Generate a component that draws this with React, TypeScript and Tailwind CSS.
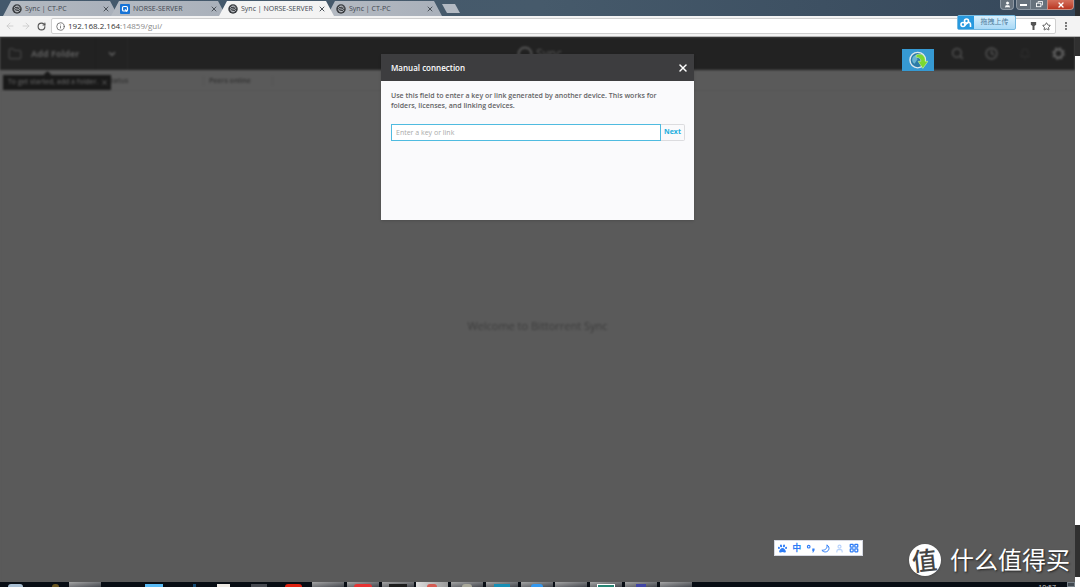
import type { ReactNode } from 'react'
import { ArrowLeft, ArrowRight, Bell, ChevronDown, Clock, Folder, Info, LayoutGrid, MoreVertical, RotateCw, Search, Star, User, X } from 'lucide-react'
import { FaPaw } from 'react-icons/fa'

function SyncIcon() {
  return (
    <svg viewBox="0 0 20 20" className="size-[10px] shrink-0">
      <circle cx="10" cy="10" r="9.500" fill="#3a3d41" />
      <path d="M15.500 7A6 6 0 0 0 5 7c-1 4 10 2 10 6a6 6 0 0 1-10 0" fill="none" stroke="#c5c9cf" strokeWidth="1.800" />
      <path d="M8 5c4 0 7 2 8 5M4 10c2 3 5 5 8 5" fill="none" stroke="#c5c9cf" strokeWidth="1.400" />
    </svg>
  )
}

function ServerIcon() {
  return (
    <svg viewBox="0 0 20 20" className="size-[10px] shrink-0">
      <rect width="20" height="20" rx="2" fill="#1673d6" />
      <rect x="5" y="5" width="10" height="9" rx="2.500" fill="none" stroke="#fff" strokeWidth="2.400" />
      <path d="M10 11l4 4" stroke="#fff" strokeWidth="2.400" />
    </svg>
  )
}

function GearIcon() {
  return (
    <svg viewBox="0 0 24 24" className="size-[13px]" fill="none" stroke="currentColor">
      <circle cx="12" cy="12" r="7.500" strokeWidth="4" />
      <circle cx="12" cy="12" r="10.500" strokeWidth="2.500" strokeDasharray="4.120 4.120" />
    </svg>
  )
}

const tabs = [
  { title: 'Sync | CT-PC', icon: <SyncIcon /> },
  { title: 'NORSE-SERVER', icon: <ServerIcon /> },
  { title: 'Sync | NORSE-SERVER', icon: <SyncIcon />, active: true },
  { title: 'Sync | CT-PC', icon: <SyncIcon /> },
]

function Tab({ title, icon, active }: { title: string; icon: ReactNode; active?: boolean }) {
  return (
    <div
      className={`-mr-[7px] flex w-[115px] items-center pr-[8px] pl-[9px] [clip-path:polygon(8px_0,107px_0,100%_100%,0_100%)] ${
        active ? 'z-10 bg-[#f3f3f3]' : 'bg-linear-to-r from-[#b4bac2] to-[#a9b0ba]'
      }`}
    >
      {icon}
      <span className="ml-[3px] flex-1 text-[7px] leading-[10px] whitespace-nowrap text-[#3f4650]">{title}</span>
      <button type="button" aria-label="Close tab" className="text-[#4b525a]">
        <X size={8} strokeWidth={3} />
      </button>
    </div>
  )
}

function TitleBar() {
  return (
    <div className="flex h-[16px] bg-linear-to-r from-[#43586c] via-[#465a6b] to-[#35475a]">
      <div className="flex flex-1 pt-px pl-[3px]">
        {tabs.map((tab, i) => (
          <Tab key={i} {...tab} />
        ))}
        <button type="button" aria-label="New tab" className="mt-[3px] ml-[7px] h-[9px] w-[18px] bg-[#b3bac3] [clip-path:polygon(0_0,13px_0,100%_100%,5px_100%)]" />
      </div>
      <div className="flex h-[10px] text-white">
        <button type="button" aria-label="Profile" className="mr-[2px] flex w-[14px] items-center justify-center rounded-b-sm border border-t-0 border-[#8e98a3] bg-[#66717c]">
          <User size={7} fill="currentColor" />
        </button>
        <button type="button" aria-label="Minimize" className="flex w-[15px] items-center justify-center rounded-bl-sm border border-t-0 border-[#8e98a3] bg-[#66717c]">
          <span className="h-[2px] w-[7px] bg-white" />
        </button>
        <button type="button" aria-label="Restore" className="flex w-[16px] items-center justify-center border-b border-[#8e98a3] bg-[#66717c]">
          <svg viewBox="0 0 8 8" className="size-[7px]" fill="none" stroke="#fff">
            <path d="M2.500 2V.5h5v4H6" />
            <rect x=".5" y="2.500" width="5" height="4" />
          </svg>
        </button>
        <button type="button" aria-label="Close" className="mr-px flex w-[27px] items-center justify-center rounded-br-sm border border-t-0 border-[#c98f82] bg-linear-to-b from-[#d4705c] to-[#b93621]">
          <X size={8} strokeWidth={4} />
        </button>
      </div>
      <div className="h-[16px] w-[5px] bg-[#2b2d30]" />
    </div>
  )
}

function Toolbar() {
  return (
    <div className="flex h-[21px] items-center border-b border-[#b5b5b5] bg-[#f3f3f3] pl-[5px] text-[#555]">
      <button type="button" aria-label="Back" className="mr-[6px] text-[#cacaca]"><ArrowLeft size={10} /></button>
      <button type="button" aria-label="Forward" className="mr-[6px] text-[#cacaca]"><ArrowRight size={10} /></button>
      <button type="button" aria-label="Reload" className="mr-[5px]"><RotateCw size={9} strokeWidth={3} /></button>
      <div className="flex h-[16px] flex-1 items-center rounded-xs border border-[#cfcfcf] bg-white px-[4px]">
        <Info size={9} />
        <label className="relative ml-[3px] flex-1 text-[8px] leading-[12px]">
          <span className="pointer-events-none absolute inset-0 text-[#8a8a8a]"><span className="text-[#333]">192.168.2.164</span>:14859/gui/</span>
          <input aria-label="Address" defaultValue="192.168.2.164:14859/gui/" className="block w-full text-transparent outline-none" />
        </label>
        <svg viewBox="0 0 10 12" className="mr-[5px] h-[8px] w-[7px]" fill="#555">
          <path d="M1 0h8v4L6.500 6v6h-3V6L1 4z" />
        </svg>
        <Star size={9} strokeWidth={2.500} />
      </div>
      <button type="button" aria-label="Menu" className="mr-[9px] ml-[5px]"><MoreVertical size={10} strokeWidth={3} /></button>
    </div>
  )
}

function SyncApp() {
  return (
    <div className="flex flex-1 flex-col bg-[#5a5a5a] blur-[1px]">
      <header className="flex h-[33px] items-center bg-[#222]">
        <button type="button" className="flex h-full w-[96px] items-center border-r border-[#1e1e1e] pl-[8px] text-[9px] font-bold text-[#5c5c5c]">
          <Folder size={14} className="mr-[9px] text-[#484848]" />
          Add Folder
        </button>
        <button type="button" aria-label="More options" className="flex h-full w-[32px] items-center justify-center border-r border-[#272727] text-[#606060]">
          <ChevronDown size={10} strokeWidth={4} />
        </button>
        <div className="flex flex-1 items-center justify-center text-[12px] text-[#555]">
          <svg viewBox="0 0 16 16" className="mr-[3px] size-[16px]" fill="none" stroke="currentColor" strokeWidth="2">
            <circle cx="8" cy="8" r="6.500" />
          </svg>
          Sync
        </div>
        <div className="flex w-[124px] items-center justify-between pr-[10px] text-[#4c4c4c]">
          <Search size={13} strokeWidth={3} />
          <Clock size={13} strokeWidth={3} />
          <Bell size={12} className="text-[#303030]" />
          <span className="text-[#606060]"><GearIcon /></span>
        </div>
      </header>
      <div className="flex h-[21px] items-center border-b border-[#555] pt-px text-[7px] leading-[10px] font-semibold text-[#303030]">
        <span className="w-[203px] pl-[107px]">Status</span>
        <span className="w-[70px] border-x border-[#545454] pl-[5px]">Peers online</span>
      </div>
      <div className="flex flex-1 items-center justify-center pb-[20px] text-[11px] text-[#3c3c3c]">Welcome to Bittorrent Sync</div>
    </div>
  )
}

function AddFolderHint() {
  return (
    <div className="absolute top-[38px] left-[3px] flex h-[15px] w-[108px] items-center justify-between bg-[#191919] pr-[3px] pl-[5px] text-[7px] text-[#6c6c6c] blur-[1px]">
      <span className="absolute -top-[3px] left-[42px] size-[5px] rotate-45 bg-[#191919]" />
      <span className="whitespace-nowrap">To get started, add a folder.</span>
      <X size={7} strokeWidth={3} />
    </div>
  )
}

function ManualConnection() {
  return (
    <div role="dialog" aria-labelledby="dialog-title" className="flex h-[166px] w-[313px] flex-col bg-[#fafafc] shadow-sm">
      <div className="flex h-[27px] items-center justify-between bg-[#3d3d3f] pr-[5px] pl-[10px] text-white">
        <h2 id="dialog-title" className="text-[8px] font-semibold">Manual connection</h2>
        <button type="button" aria-label="Close"><X size={12} strokeWidth={3} /></button>
      </div>
      <div className="pt-[10px] pr-[9px] pl-[10px]">
        <p className="pr-[16px] text-[7px] leading-[10px] font-semibold text-[#626264]">
          Use this field to enter a key or link generated by another device. This works for folders, licenses, and linking devices.
        </p>
        <div className="mt-[13px] flex h-[17px] text-[7px]">
          <input aria-label="Key or link" placeholder="Enter a key or link" className="min-w-0 flex-1 border border-[#4fbbe0] bg-white px-[4px] pt-px outline-none placeholder:text-[#aaa]" />
          <button type="button" className="w-[24px] rounded-r-xs border border-l-0 border-[#dcdcdf] font-bold text-[#22aede]">Next</button>
        </div>
      </div>
    </div>
  )
}

function DownloadBadge() {
  return (
    <button type="button" aria-label="Download" className="absolute top-[49px] left-[902px] flex h-[22px] w-[32px] items-center justify-center bg-[#3699d2]">
      <svg viewBox="0 0 24 24" className="size-[19px]">
        <circle cx="11" cy="11.500" r="9.800" fill="#2c7ba8" stroke="#dfe8ed" strokeWidth="1.800" />
        <path d="M4 11c0-4 3-6 6-6l-1 3 2 2-4 6c-2-1-3-3-3-5z" fill="#69b4d3" />
        <path d="M9 5c7-3 12 1 11.500 8H24l-6.500 9-6-9H15c0-3-2-5-6-5z" fill="#7bd831" stroke="#d9f5b8" strokeWidth=".7" />
      </svg>
    </button>
  )
}

function UploadWidget() {
  return (
    <button type="button" className="absolute top-[15px] left-[957px] flex h-[15px] w-[59px] items-center rounded-xs border border-[#75b8df] bg-linear-to-b from-[#d9f0fd] to-[#a9d9f6] text-[7px] text-[#4f7b9c]">
      <span className="flex h-full w-[16px] items-center justify-center bg-[#2799df]">
        <svg viewBox="0 0 24 20" className="h-[10px] w-[12px]" fill="none" stroke="#fff" strokeWidth="3.200">
          <circle cx="6" cy="13" r="4" />
          <circle cx="13" cy="6" r="4" />
          <path d="M9 15l7-6c3-1 5 1 5 4v5" />
        </svg>
      </span>
      <span className="flex-1 text-center whitespace-nowrap">拖拽上传</span>
    </button>
  )
}

function ImeBar() {
  return (
    <div className="absolute top-[540px] left-[774px] flex h-[16px] w-[89px] items-center justify-between border border-[#d5d8e2] bg-white px-[3px] text-[9px] font-bold text-[#2d7cf6]">
      <FaPaw size={9} />
      <span>中</span>
      <svg viewBox="0 0 10 10" className="size-[9px]">
        <circle cx="3" cy="3" r="1.500" fill="none" stroke="currentColor" strokeWidth="1.200" />
        <path d="M7 5h2.500v2L8 9.500H7L7.800 8H7z" fill="currentColor" />
      </svg>
      <svg viewBox="0 0 20 20" className="size-[9px]" fill="none" stroke="currentColor" strokeWidth="2.200">
        <path d="M13 2c2 6-2 12-11 12 4 5 12 5 15-1 2-4 0-9-4-11z" />
      </svg>
      <User size={9} strokeWidth={3} className="text-[#b5d1fc]" />
      <LayoutGrid size={10} strokeWidth={3} />
    </div>
  )
}

function Watermark() {
  return (
    <div className="absolute right-[10px] bottom-[11px] flex items-center text-white">
      <span className="mr-[9px] flex size-[32px] items-center justify-center rounded-full bg-white text-[25px] leading-none font-medium text-[#444] shadow-sm">
        <span className="-rotate-6">值</span>
      </span>
      <span className="text-[24px] leading-[32px] whitespace-nowrap text-shadow-[1px_1px_2px_#222]">什么值得买</span>
    </div>
  )
}

const windowStyle = 'w-[32px] bg-linear-to-br from-[#a5a5a5] to-[#474a50]'

const taskbar = [
  { box: '', mark: 'w-[15px] rounded-t-full bg-[#a9bfd3]' },
  { box: '', mark: 'ml-[10px] w-[7px] rounded-t-full bg-[#6b5620]' },
  { box: windowStyle, mark: '' },
  { box: '', mark: '' },
  { box: '', mark: 'w-[18px] bg-[#58baf5]' },
  { box: '', mark: 'ml-[10px] w-[3px] bg-[#164c75]' },
  { box: '', mark: 'w-[13px] bg-[#eeeae4]' },
  { box: '', mark: 'w-[16px] bg-[#45484f]' },
  { box: '', mark: 'w-[17px] rounded-t-sm bg-[#df2110]' },
  { box: windowStyle, mark: '' },
  { box: windowStyle, mark: 'w-[18px] rounded-t-full bg-[#e63232]' },
  { box: windowStyle, mark: 'w-[18px] bg-[#1c1c1c]' },
  { box: 'w-[32px] bg-linear-to-r from-[#ddd] to-[#999]', mark: 'w-[10px] rounded-t-full bg-[#d55b52]' },
  { box: windowStyle, mark: 'w-[10px] rounded-t-full bg-[#aaa99a]' },
  { box: windowStyle, mark: 'w-[16px] bg-[#168fb5]' },
  { box: windowStyle, mark: 'w-[12px] rounded-t-full bg-[#3398ef]' },
  { box: windowStyle, mark: '' },
  { box: windowStyle, mark: 'w-[18px] border border-b-0 border-white bg-[#278473]' },
  { box: windowStyle, mark: 'w-[10px] bg-[#4145a5]' },
  { box: windowStyle, mark: '' },
]

function Taskbar() {
  return (
    <div className="flex h-[5px] shrink-0 justify-between overflow-hidden bg-[#080d14]">
      <div className="-ml-[2px] flex w-[695px]">
        {taskbar.map(({ box, mark }, i) => (
          <div key={i} className="flex flex-1 justify-center">
            <div className={`flex h-[5px] justify-center pt-[2px] ${box}`}>
              <div className={`h-[3px] ${mark}`} />
            </div>
          </div>
        ))}
      </div>
      <div className="flex">
        <span className="mr-[11px] text-[7px] leading-[12px] text-[#ccc]">10:57</span>
        <button type="button" aria-label="Show desktop" className="w-[8px] border border-[#778088] bg-[#414950]" />
        <div className="w-[5px] bg-white" />
      </div>
    </div>
  )
}

export default function App() {
  return (
    <div className="relative flex h-screen flex-col overflow-hidden bg-[#5a5a5a] font-['Open_Sans','Noto_Sans_CJK_SC',sans-serif]">
      <TitleBar />
      <Toolbar />
      <div className="flex min-h-0 flex-1">
        <main className="relative flex flex-1 flex-col overflow-hidden">
          <SyncApp />
          <AddFolderHint />
          <div className="absolute inset-0 flex items-start justify-center pt-[17px]">
            <ManualConnection />
          </div>
        </main>
        <div className="flex w-[5px] flex-col bg-[#303030] pt-[19px]">
          <div className="mb-[52px] flex-1 bg-white" />
          <div className="h-[5px] bg-white" />
        </div>
      </div>
      <Taskbar />
      <UploadWidget />
      <DownloadBadge />
      <ImeBar />
      <Watermark />
    </div>
  )
}
